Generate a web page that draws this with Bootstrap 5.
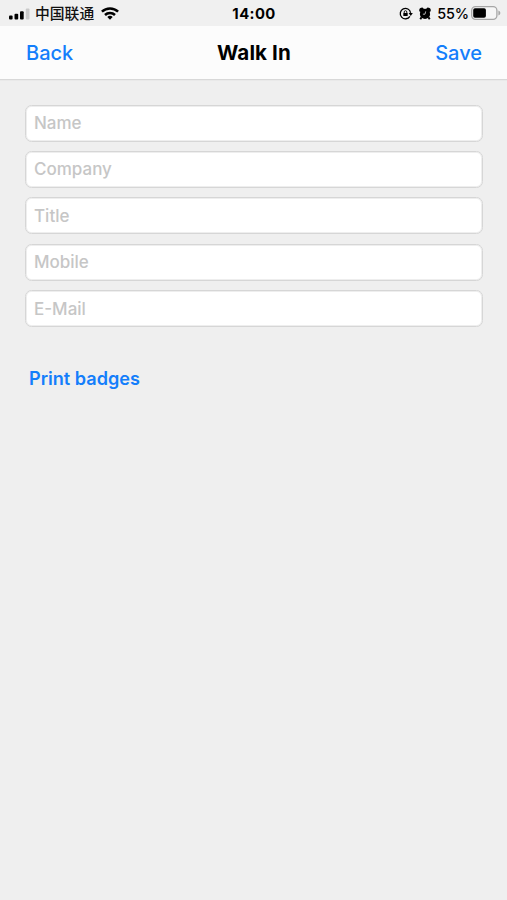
<!DOCTYPE html>
<html lang="en">
<head>
<meta charset="utf-8">
<meta name="viewport" content="width=device-width, initial-scale=1">
<title>Walk In</title>
<link href="https://cdn.jsdelivr.net/npm/bootstrap@5.3.0/dist/css/bootstrap.min.css" rel="stylesheet">
<style>
body{background:#efefef;font-family:Inter,"Noto Sans CJK SC",sans-serif;color:#000;min-height:100vh;overflow:hidden}
svg{display:block;flex:none}
.status{height:26px;padding:0 6px 0 9px;line-height:1;background:#f0f0f0}
.status .side{flex:1 1 0}
.carrier{font:500 14.8px/24px "Noto Sans CJK SC",sans-serif;margin:-1px 7px 0 5px;color:#111}
.clock{font-size:14.8px;font-weight:700;letter-spacing:.4px;margin:2px 2px 0 0}
.percent{font-size:14.4px;font-weight:500;margin:2px 2px 0 6px;letter-spacing:-.1px}
.signal{margin-top:2px}
.lock{margin-top:1px}
.alarm{margin-left:6px}
.titlebar{height:54px;background:#fcfcfc;border-bottom:1px solid #d8d8d8;box-shadow:0 1px 0 #e9e9e9;padding:0 25px 0 26px;line-height:1}
.titlebar .side{flex:1 1 0;font-size:20px;font-weight:500;color:#147efb;text-decoration:none}
.titlebar h1{font-size:20.6px;font-weight:700;letter-spacing:.1px;padding-top:1px}
.fields{padding:24.5px 24.5px 0 25px;gap:9.4px}
.fields .form-control{height:37px;border:1px solid #d6d6d6;box-shadow:inset 0 0 0 1px #eee;border-radius:6.5px;padding:0 8px;font-size:17px;font-weight:550;background:#fff}
.fields .form-control::placeholder{color:#c6c6c6;opacity:1}
.print{font-size:18.1px;font-weight:600;color:#147efb;text-decoration:none;line-height:24px;margin:39px 0 0 29px}
</style>
<script src="https://cdn.jsdelivr.net/npm/bootstrap@5.3.0/dist/js/bootstrap.bundle.min.js"></script>
</head>
<body>
<header>
  <div class="status d-flex align-items-center">
    <div class="side d-flex align-items-center">
      <svg class="signal" width="21" height="12" viewBox="0 0 21 12"><rect x="0" y="7.5" width="3.6" height="4" rx="1"/><rect x="5.5" y="5.8" width="3.7" height="5.7" rx="1"/><rect x="11" y="3.2" width="3.7" height="8.3" rx="1"/><rect x="16.8" y=".5" width="3.7" height="11" rx="1" fill="#c9c9c9"/></svg>
      <span class="carrier">中国联通</span>
      <svg width="18" height="13" viewBox="0 0 18 13" fill="none" stroke="#000" stroke-width="2.5"><path d="M.9 4.7a11.7 11.7 0 0 1 16.2 0"/><path d="M4 8a7.2 7.2 0 0 1 10 0"/><path d="M9 12.7 6.3 10a3.9 3.9 0 0 1 5.4 0z" fill="#000" stroke="none"/></svg>
    </div>
    <span class="clock">14:00</span>
    <div class="side d-flex align-items-center justify-content-end">
      <svg class="lock" width="14" height="13" viewBox="0 0 14 13" fill="none" stroke="#000" stroke-width="1.3"><path d="M10.9 9.3a5.2 5.2 0 1 1 .7-3.5"/><path d="m9.6 6 4.2.1-2 3z" fill="#000" stroke="none"/><rect x="4.3" y="6.1" width="4.4" height="3" rx=".5" fill="#000" stroke="none"/><path d="M5.2 6.3V5a1.3 1.3 0 0 1 2.6 0v1.3" stroke-width=".9"/></svg>
      <svg class="alarm" width="12" height="13" viewBox="0 0 12 13"><circle cx="6" cy="6.9" r="5.1"/><path d="M.3 4Q-.2.7 3.5.6L5 1.9 1.2 5.2zM11.7 4Q12.2.7 8.5.6L7 1.9l3.8 3.3z"/><path d="m2.5 10.3-1.2 2M9.5 10.3l1.2 2" stroke="#000" stroke-width="1.9"/><path d="M6.7 4.4 6 7.2H3.9" fill="none" stroke="#ddd" stroke-width=".8"/></svg>
      <span class="percent">55%</span>
      <svg width="30" height="14" viewBox="0 0 30 14"><rect x=".7" y=".7" width="25.2" height="12.6" rx="3.8" fill="#f6f6f6" stroke="#a6a6a6" stroke-width="1.3"/><rect x="2.2" y="2.2" width="12.7" height="9.6" rx="1.8"/><path d="M27.4 4.6q2 .8 2 2.4t-2 2.4z" fill="#a6a6a6"/></svg>
    </div>
  </div>
  <nav class="titlebar d-flex align-items-center">
    <a href="#" class="side">Back</a>
    <h1 class="mb-0">Walk In</h1>
    <a href="#" class="side text-end">Save</a>
  </nav>
</header>
<main>
  <form class="fields d-flex flex-column">
    <input class="form-control" type="text" placeholder="Name" aria-label="Name">
    <input class="form-control" type="text" placeholder="Company" aria-label="Company">
    <input class="form-control" type="text" placeholder="Title" aria-label="Title">
    <input class="form-control" type="tel" placeholder="Mobile" aria-label="Mobile">
    <input class="form-control" type="email" placeholder="E-Mail" aria-label="E-Mail">
  </form>
  <a href="#" class="print d-inline-block">Print badges</a>
</main>
</body>
</html>
